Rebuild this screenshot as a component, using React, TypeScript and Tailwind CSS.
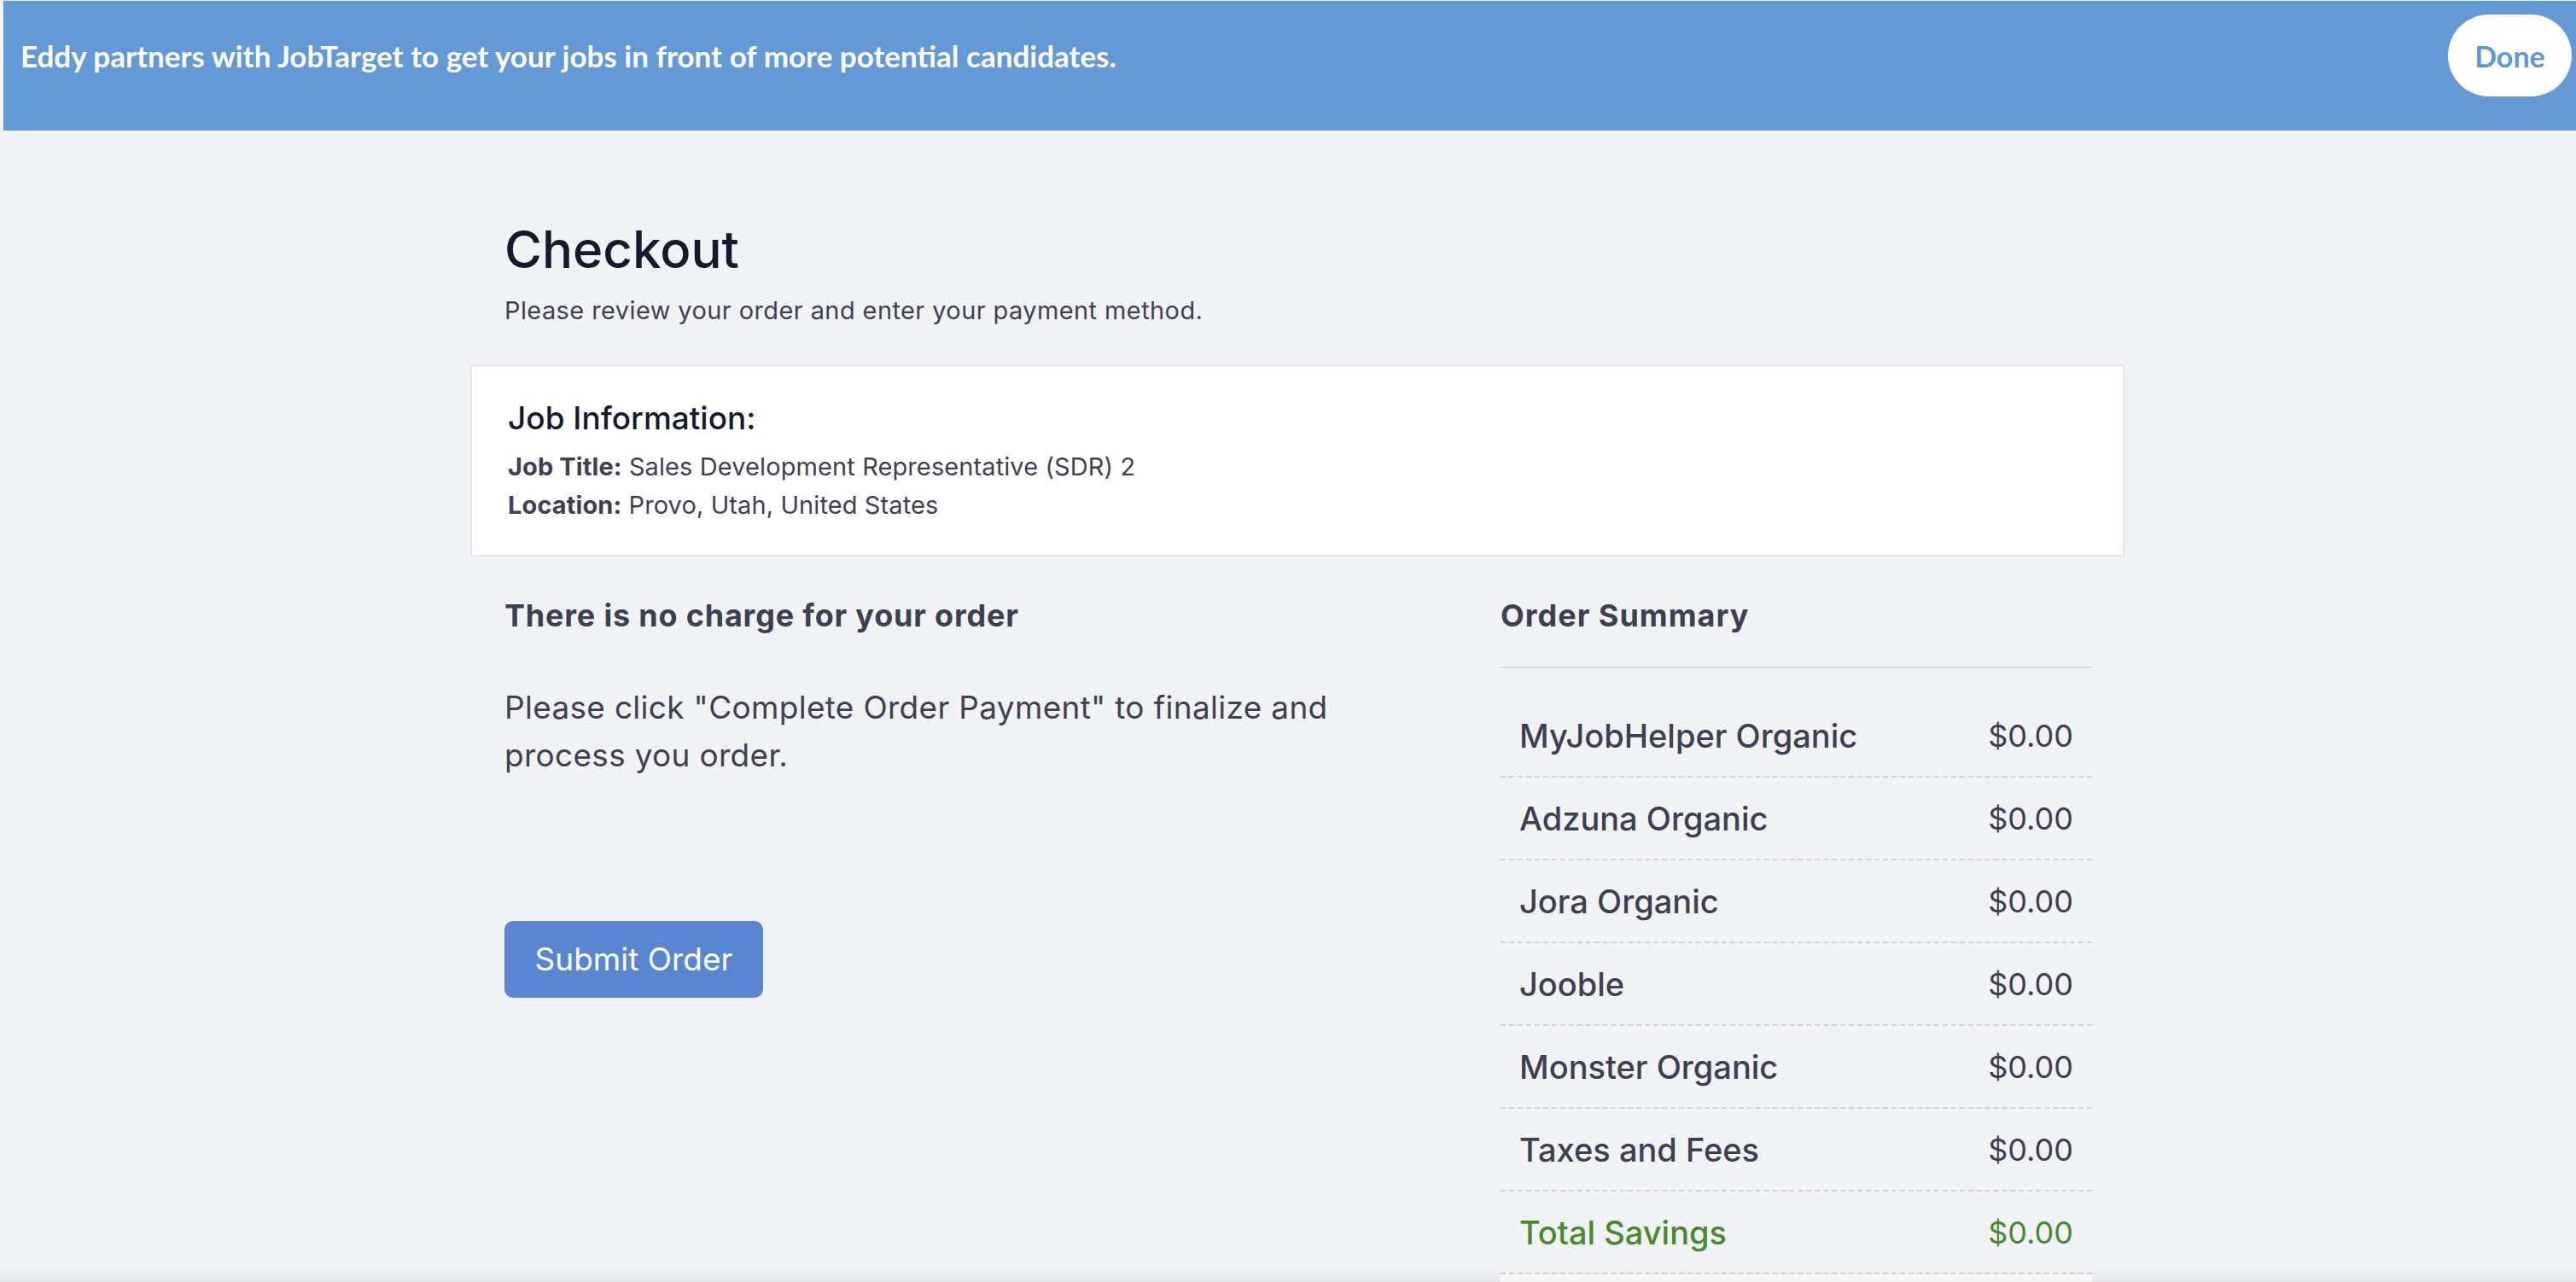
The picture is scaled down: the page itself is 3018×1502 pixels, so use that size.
import React from "react";

const poppins = { fontFamily: "Inter, 'Noto Sans', sans-serif" };

const items = [
  { name: "MyJobHelper Organic", price: "$0.00" },
  { name: "Adzuna Organic", price: "$0.00" },
  { name: "Jora Organic", price: "$0.00" },
  { name: "Jooble", price: "$0.00" },
  { name: "Monster Organic", price: "$0.00" },
  { name: "Taxes and Fees", price: "$0.00" },
];

const App: React.FC = () => {
  return (
    <div className="min-h-screen bg-[#f2f3f7] pl-[4px] pt-[1px]" style={poppins}>
      {/* Partner banner */}
      <div className="h-[152px] bg-[#6399d4]">
        <div className="h-[128px] flex items-center justify-between pl-[20px] pr-[5px]">
          <p className="text-[35px] font-bold text-white font-['Lato',sans-serif]">
            Eddy partners with JobTarget to get your jobs in front of more potential candidates.
          </p>
          <button className="w-[145px] h-[96px] rounded-full bg-white text-[#5f98d5] text-[34px] font-bold font-['Lato',sans-serif]">
            Done
          </button>
        </div>
      </div>

      <div className="flex justify-center pl-[18px]">
        <div className="w-[1938px]">
          {/* Header */}
          <div className="px-[40px] pt-[109px]">
            <h1 className="text-[60px] leading-none font-medium text-[#161a2d]">
              Checkout
            </h1>
            <p className="mt-[27px] text-[29px] leading-none tracking-[0.4px] text-[#3f4153]">
              Please review your order and enter your payment method.
            </p>
          </div>

          {/* Job information card */}
          <div className="mt-[49px] bg-white border-2 border-[#e3e5ea] pl-[42px] pt-[42px] pb-[36px]">
            <h2 className="text-[37px] leading-none font-medium text-[#161a2d]">
              Job Information:
            </h2>
            <div className="mt-[16px] text-[29px] leading-[45px] tracking-[0.1px] text-[#3f4153]">
              <p>
                <span className="font-bold">Job Title:</span> Sales Development Representative (SDR) 2
              </p>
              <p>
                <span className="font-bold">Location:</span> Provo, Utah, United States
              </p>
            </div>
          </div>

          {/* Payment + summary */}
          <div className="flex pl-[40px] pr-[38px] pt-[51px]">
            <div className="flex-1">
              <h3 className="text-[36px] leading-none font-bold text-[#3d3f52] tracking-[0.8px]">
                There is no charge for your order
              </h3>
              <p className="mt-[62px] max-w-[1040px] text-[37px] leading-[56px] tracking-[0.3px] text-[#3f4153]">
                Please click "Complete Order Payment" to finalize and process you order.
              </p>
              <button className="mt-[166px] w-[303px] h-[90px] rounded-[10px] bg-[#5985d1] text-white text-[37px]">
                Submit Order
              </button>
            </div>

            <div className="w-[693px]">
              <h3 className="text-[36px] leading-none font-bold text-[#3d3f52] tracking-[1px]">
                Order Summary
              </h3>
              <div className="mt-[42px] border-t-2 border-[#dcdde2]" />
              <div className="mt-[31px]">
                {items.map((item) => (
                  <div
                    key={item.name}
                    className="h-[97px] flex items-center justify-between px-[22px] border-b-2 border-dashed border-[#d3d4d9]"
                  >
                    <span className="text-[38px] leading-none font-medium text-[#3d3f52]">
                      {item.name}
                    </span>
                    <span className="text-[36px] leading-none text-[#3d3f52]">{item.price}</span>
                  </div>
                ))}
                <div className="h-[97px] flex items-center justify-between px-[22px] border-b-2 border-dashed border-[#d3d4d9]">
                  <span className="text-[38px] leading-none font-medium text-[#4a8a2f]">
                    Total Savings
                  </span>
                  <span className="text-[36px] leading-none text-[#4a8a2f]">$0.00</span>
                </div>
                <div className="h-[100px] bg-white" />
              </div>
            </div>
          </div>
        </div>
      </div>

      <div className="fixed inset-x-0 bottom-0 h-[18px] bg-gradient-to-t from-black/5 to-transparent pointer-events-none" />
    </div>
  );
};

export default App;
